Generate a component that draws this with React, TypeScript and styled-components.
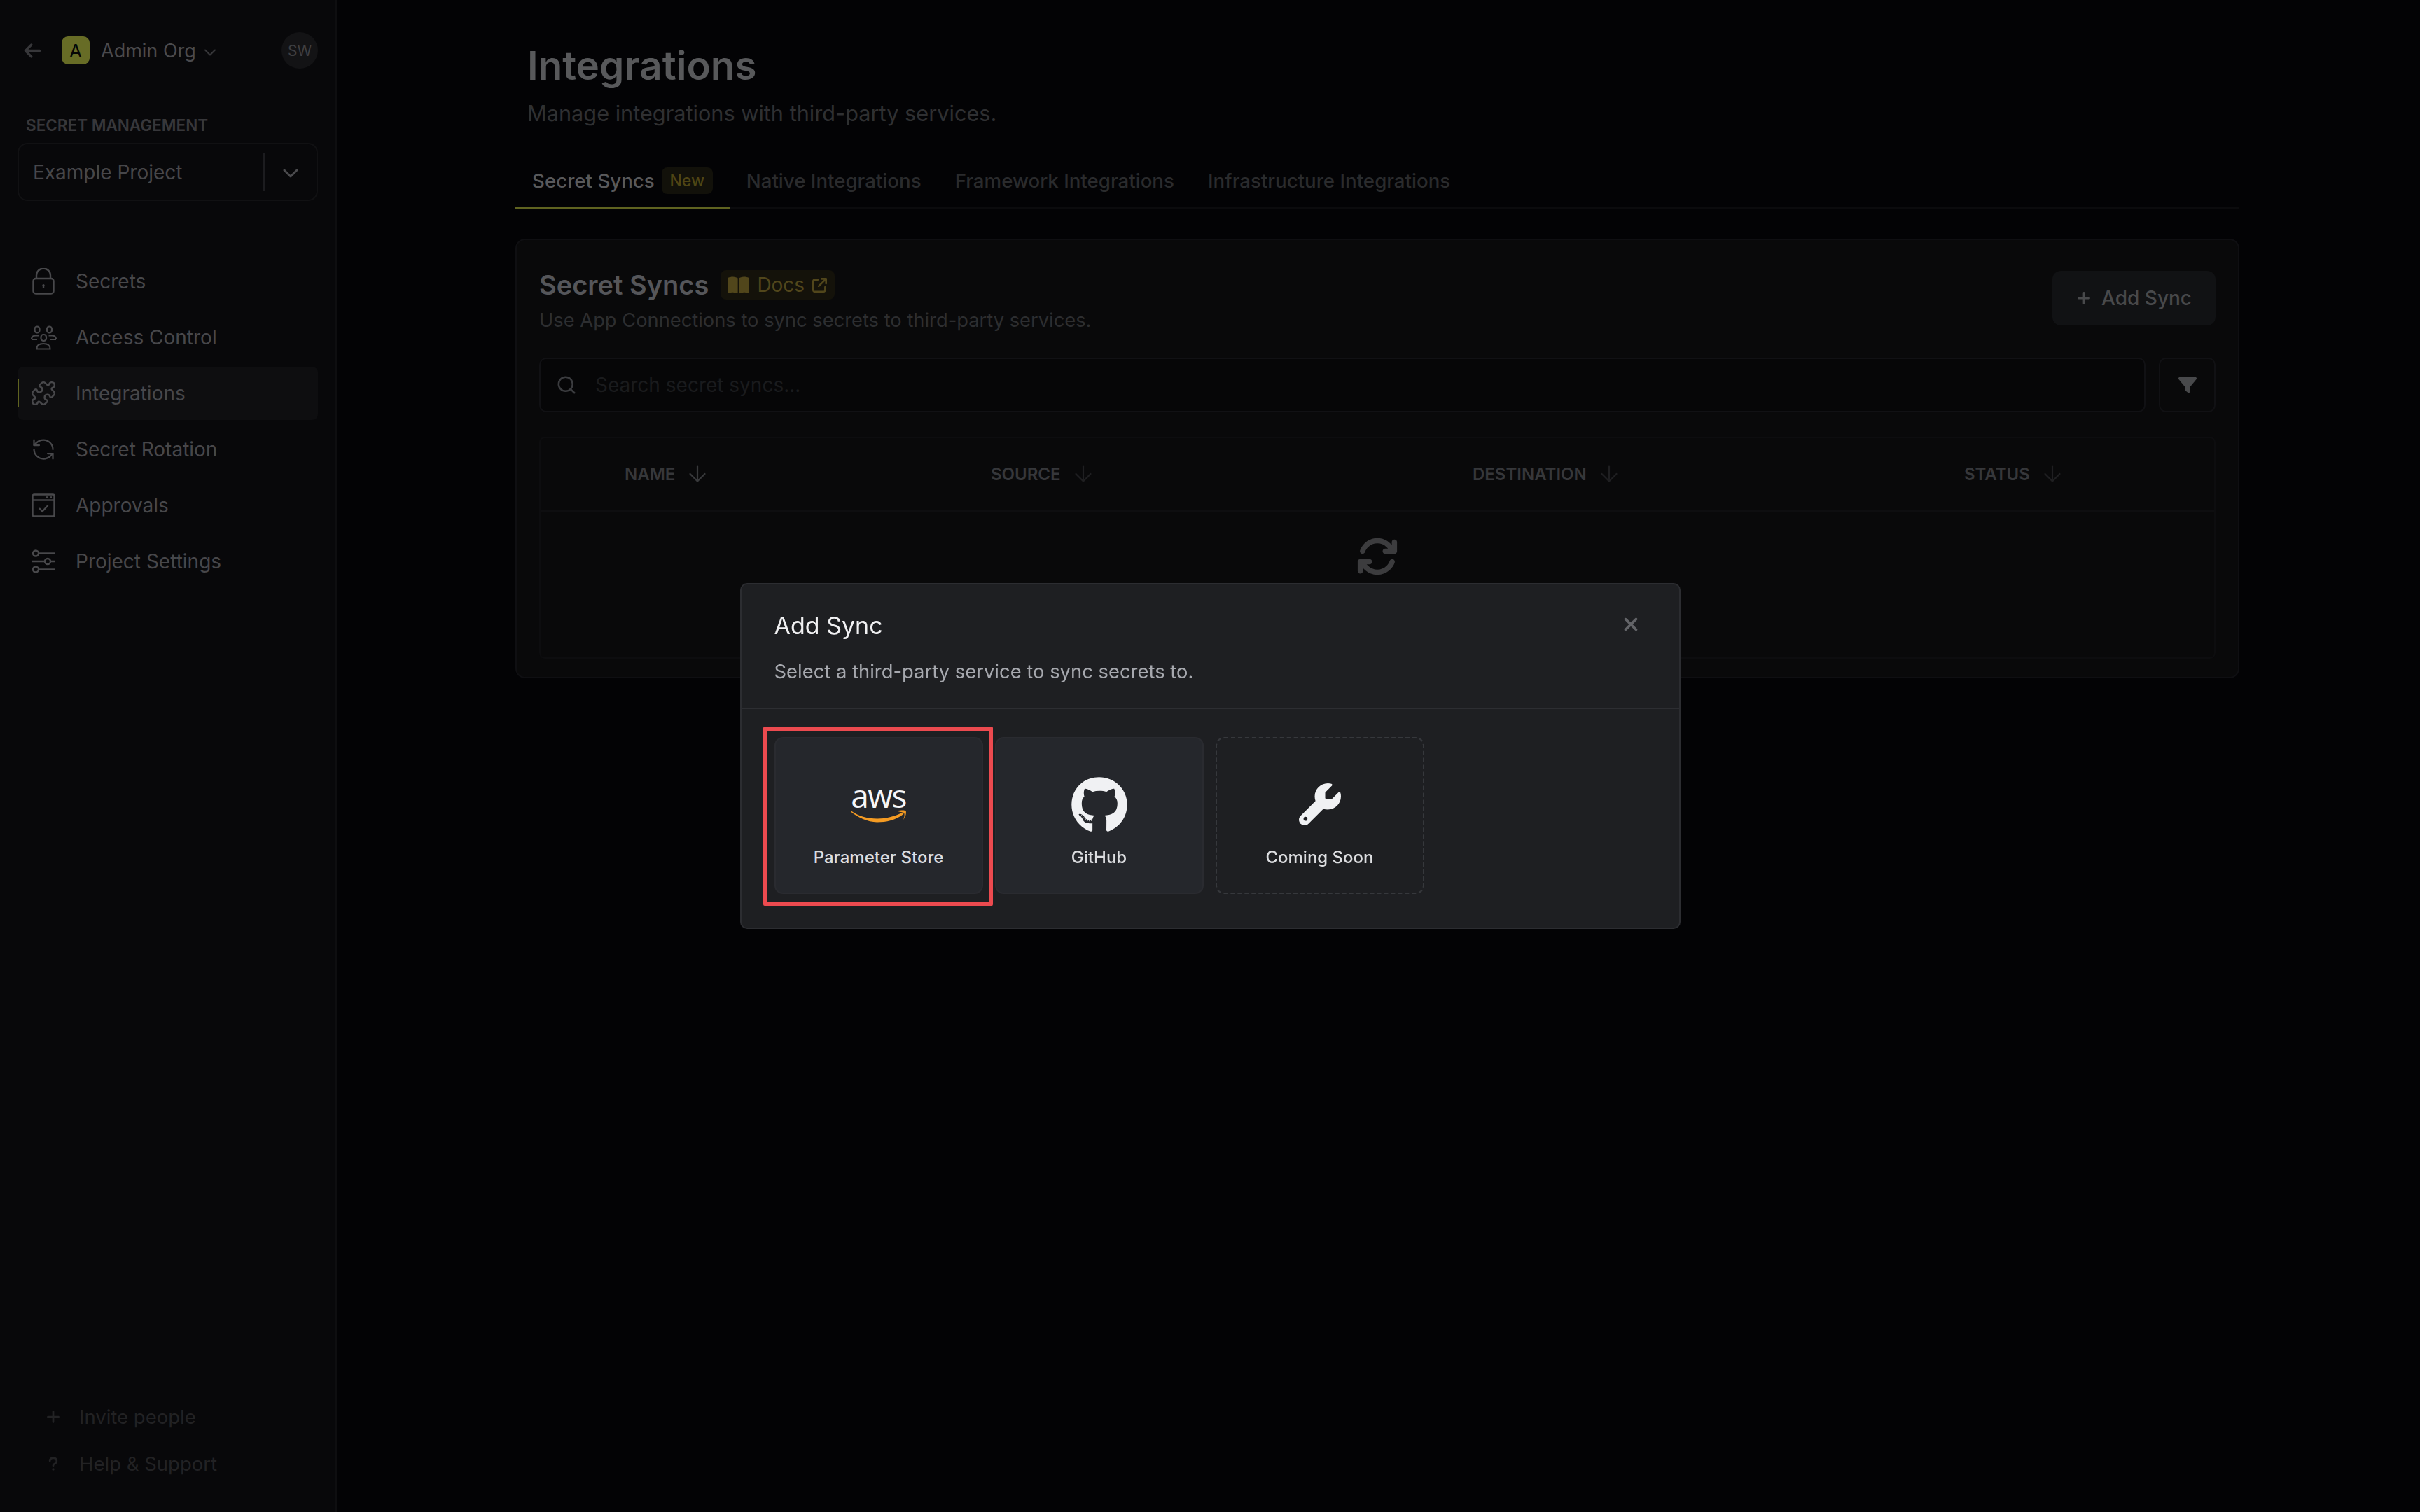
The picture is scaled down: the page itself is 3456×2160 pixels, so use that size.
import React from "react";
import styled, { createGlobalStyle } from "styled-components";
import {
  FaArrowLeft,
  FaArrowsRotate,
  FaArrowUpRightFromSquare,
  FaBookOpen,
  FaChevronDown,
  FaFilter,
  FaGithub,
  FaPlus,
  FaQuestion,
  FaWrench,
  FaXmark,
} from "react-icons/fa6";
import { ArrowDown, ChevronDown, Puzzle, RefreshCcw, Search } from "lucide-react";

const GlobalStyle = createGlobalStyle`
  html, body {
    margin: 0;
    width: 3456px;
    height: 2160px;
    overflow: hidden;
    background: #030305;
    font-family: "Inter", "Liberation Sans", sans-serif;
  }
  * { box-sizing: border-box; }
`;

const Page = styled.div`
  display: flex;
  width: 3456px;
  height: 2160px;
`;

/* sidebar */

const Sidebar = styled.aside`
  display: flex;
  flex-direction: column;
  flex: none;
  width: 481px;
  height: 100%;
  padding: 46px 25px 36px 25px;
  background: #08080a;
  border-right: 2px solid #0e0e10;
`;

const OrgRow = styled.div`
  display: flex;
  align-items: center;
  height: 52px;
  padding-left: 8px;
  color: #37373a;
  font-size: 27px;
`;

const OrgLogo = styled.div`
  display: grid;
  place-items: center;
  width: 40px;
  height: 40px;
  margin-left: 28px;
  border-radius: 9px;
  background: #676c26;
  color: #050505;
  font-size: 26px;
`;

const OrgName = styled.span`
  margin-left: 16px;
  color: #4a4a4d;
`;

const OrgChevron = styled(ChevronDown)`
  margin: 6px 0 0 6px;
`;

const Avatar = styled.div`
  display: grid;
  place-items: center;
  width: 52px;
  height: 52px;
  margin-left: auto;
  border-radius: 50%;
  background: #131315;
  color: #3f3f42;
  font-size: 21px;
`;

const SectionLabel = styled.div`
  margin: 65px 0 0 12px;
  color: #37373a;
  font-size: 22.5px;
  font-weight: 600;
  line-height: 32px;
`;

const ProjectSelect = styled.div`
  display: flex;
  align-items: center;
  height: 83px;
  margin-top: 9px;
  padding-left: 20px;
  border: 2px solid #111113;
  border-radius: 14px;
  color: #47474a;
  font-size: 28px;
`;

const SelectChevron = styled.div`
  display: grid;
  place-items: center;
  width: 76px;
  height: 55px;
  margin-left: auto;
  border-left: 2px solid #1c1c1f;
  color: #4b4b4e;
  font-size: 24px;
`;

const Nav = styled.nav`
  display: flex;
  flex-direction: column;
  gap: 4px;
  margin-top: 77px;
`;

const NavItem = styled.div<{ $active?: boolean }>`
  position: relative;
  display: flex;
  align-items: center;
  height: 76px;
  border-radius: 8px;
  background: ${({ $active }) => ($active ? "#0e0e10" : "transparent")};
  color: #47474a;
  font-size: 28px;
  &::before {
    content: "";
    display: ${({ $active }) => ($active ? "block" : "none")};
    position: absolute;
    left: 0;
    top: 18px;
    width: 2px;
    height: 40px;
    background: #5f6320;
  }
`;

const NavIcon = styled.span`
  display: grid;
  place-items: center;
  flex: none;
  width: 74px;
  margin-right: 9px;
  color: #48484b;
  svg {
    display: block;
  }
`;

const Footer = styled.div`
  display: flex;
  flex-direction: column;
  margin-top: auto;
`;

const FooterItem = styled.div`
  display: flex;
  align-items: center;
  height: 67px;
  padding-left: 40px;
  color: #222224;
  font-size: 27.5px;
  svg {
    width: 22px;
    height: 22px;
    margin-right: 26px;
  }
`;

const LockIcon = () => (
  <svg width="32" height="38" viewBox="0 0 32 38" fill="none" stroke="currentColor" strokeWidth="2.4">
    <rect x="1.5" y="15" width="29" height="21.5" rx="3.5" />
    <path d="M6 15V10.5a10 10 0 0 1 20 0V15" />
    <circle cx="16" cy="24.5" r="1.6" fill="currentColor" stroke="none" />
    <path d="M16 25v4" />
  </svg>
);

const UsersIcon = () => (
  <svg width="37" height="35" viewBox="0 0 37 35" fill="none" stroke="currentColor" strokeWidth="2.2">
    <rect x="5.5" y="1.5" width="7" height="9" rx="3.5" />
    <rect x="23" y="1.5" width="7" height="9" rx="3.5" />
    <rect x="14.5" y="13" width="7.5" height="9" rx="3.5" />
    <path d="M1 20c0-4 2.5-5.5 6-5.5h4.5M36 20c0-4-2.500-5.500-6-5.500h-4.500M1 20h8M36 20h-8" />
    <path d="M8.500 33.500c0-5 3-7.500 9.500-7.500s9.500 2.500 9.500 7.500z" />
  </svg>
);

const ApprovalIcon = () => (
  <svg width="34" height="34" viewBox="0 0 34 34" fill="none" stroke="currentColor" strokeWidth="2.4">
    <rect x="1.500" y="1.500" width="31" height="31" rx="2" />
    <path d="M1.500 9.500h31" />
    <path d="M21 5.500h2M27 5.500h2" />
    <path d="M11 21l4.500 4.500L23.500 17" />
  </svg>
);

const SlidersIcon = () => (
  <svg width="34" height="34" viewBox="0 0 34 34" fill="none" stroke="currentColor" strokeWidth="2.4">
    <circle cx="6" cy="5.500" r="4" />
    <path d="M10 5.500h23" />
    <circle cx="23" cy="17" r="4" />
    <path d="M1 17h18M27 17h6" />
    <circle cx="6" cy="28.500" r="4" />
    <path d="M10 28.500h23" />
  </svg>
);

/* main column */

const Main = styled.main`
  flex: 1;
  padding-top: 58px;
`;

const Content = styled.div`
  width: 2462px;
  margin-left: 255px;
`;

const PageTitle = styled.h1`
  margin: 0 0 0 17px;
  color: #58595b;
  font-size: 56.5px;
  font-weight: 600;
  line-height: 72px;
`;

const PageSubtitle = styled.p`
  margin: 10px 0 0 17px;
  color: #2f3032;
  font-size: 30.7px;
  line-height: 44px;
`;

const Tabs = styled.div`
  display: flex;
  height: 81px;
  margin-top: 33px;
  border-bottom: 2px solid #0b0b0d;
`;

const Tab = styled.div<{ $active?: boolean }>`
  display: flex;
  align-items: center;
  gap: 10px;
  height: 81px;
  padding: 2px 24px 0 24px;
  border-bottom: 2px solid ${({ $active }) => ($active ? "#5f6320" : "transparent")};
  color: ${({ $active }) => ($active ? "#59595b" : "#2a2b2d")};
  font-size: 27.7px;
  font-weight: 500;
`;

const NewBadge = styled.span`
  display: grid;
  place-items: center;
  width: 73px;
  height: 38px;
  border-radius: 8px;
  background: #12110a;
  color: #4f4514;
  font-size: 23px;
`;

const Card = styled.section`
  margin-top: 43px;
  padding: 44px 32px 26px 32px;
  border: 2px solid #0f0f12;
  border-radius: 14px;
  background: #09090a;
`;

const CardHead = styled.div`
  display: flex;
  justify-content: space-between;
  height: 78px;
`;

const HeadingRow = styled.div`
  display: flex;
  align-items: center;
  gap: 17px;
  height: 40px;
`;

const Heading = styled.h2`
  margin: 0;
  color: #55565a;
  font-size: 38px;
  font-weight: 600;
`;

const DocsBadge = styled.span`
  display: flex;
  align-items: center;
  gap: 11px;
  height: 42px;
  padding: 0 11px 0 10px;
  border-radius: 8px;
  background: #14120a;
  color: #51461b;
  font-size: 28px;
  svg:first-child {
    font-size: 31px;
  }
  svg:last-child {
    font-size: 21px;
  }
`;

const CardSub = styled.p`
  margin: 13px 0 0;
  color: #2d2e30;
  font-size: 27.3px;
  line-height: 36px;
`;

const AddButton = styled.div`
  display: flex;
  align-items: center;
  gap: 14px;
  height: 78px;
  padding: 0 34px;
  border-radius: 12px;
  background: #111214;
  color: #48494b;
  font-size: 28px;
  font-weight: 500;
  svg {
    font-size: 22px;
  }
`;

const Toolbar = styled.div`
  display: flex;
  gap: 19px;
  margin-top: 46px;
`;

const SearchBox = styled.div`
  display: flex;
  flex: 1;
  align-items: center;
  gap: 26px;
  height: 78px;
  padding-left: 22px;
  border: 2px solid #111114;
  border-radius: 10px;
  background: #060607;
  color: #1a1b1d;
  font-size: 28px;
  svg {
    color: #3b3c3f;
  }
`;

const FilterButton = styled.div`
  display: grid;
  place-items: center;
  width: 81px;
  height: 78px;
  border: 2px solid #111114;
  border-radius: 10px;
  color: #48494b;
  font-size: 26px;
`;

const Table = styled.div`
  height: 317px;
  margin-top: 35px;
  border: 2px solid #0d0d0f;
  border-radius: 8px;
`;

const TableHeader = styled.div`
  display: grid;
  grid-template-columns: 120px 523px 688px 702px 1fr;
  align-items: center;
  height: 105px;
  border-bottom: 3px solid #0e0e10;
`;

const HeaderCell = styled.div<{ $sorted?: boolean }>`
  display: flex;
  align-items: center;
  gap: 14px;
  color: #36373a;
  font-size: 24px;
  font-weight: 600;
  svg {
    color: ${({ $sorted }) => ($sorted ? "#38393b" : "#1f1f21")};
  }
`;

const TableBody = styled.div`
  display: flex;
  justify-content: center;
  padding-top: 34px;
  color: #3c3c3e;
  font-size: 60px;
`;

/* modal */

const Overlay = styled.div`
  position: fixed;
  inset: 0;
  display: grid;
  place-items: center;
`;

const Modal = styled.div`
  width: 1343px;
  height: 494px;
  border: 2px solid #2c2d31;
  border-radius: 10px;
  background: #1e1f22;
`;

const ModalHead = styled.div`
  position: relative;
  height: 178px;
  padding: 35px 47px 0;
  border-bottom: 2px solid #2d2e32;
`;

const ModalTitle = styled.h3`
  margin: 0;
  color: #f1f1f3;
  font-size: 34px;
  font-weight: 400;
  line-height: 48px;
`;

const ModalSub = styled.p`
  margin: 23px 0 0;
  color: #a6a8ae;
  font-size: 27.4px;
  line-height: 36px;
`;

const CloseButton = styled.div`
  position: absolute;
  top: 42px;
  right: 54px;
  color: #636468;
  font-size: 30px;
  line-height: 0;
`;

const CardGrid = styled.div`
  display: grid;
  grid-template-columns: repeat(4, 298px);
  gap: 17px;
  padding: 40px 47px 0;
`;

const ServiceCard = styled.div<{ $dashed?: boolean }>`
  position: relative;
  display: flex;
  flex-direction: column;
  align-items: center;
  height: 224px;
  border: 2px ${({ $dashed }) => ($dashed ? "dashed #36383c" : "solid #2a2b30")};
  border-radius: 12px;
  background: ${({ $dashed }) => ($dashed ? "transparent" : "#25272c")};
`;

const ServiceLogo = styled.div`
  display: grid;
  place-items: center;
  height: 80px;
  margin-top: 54px;
  color: #f0f1f3;
  font-size: 60px;
`;

const ServiceName = styled.div`
  margin-top: 20px;
  color: #dcdde0;
  font-size: 24px;
  font-weight: 500;
  line-height: 32px;
`;

const Highlight = styled.div`
  position: absolute;
  top: -17px;
  left: -18px;
  width: 328px;
  height: 256px;
  border: 6px solid #ec4a4f;
  border-radius: 2px;
  pointer-events: none;
`;

const AwsMark = styled.div`
  display: flex;
  flex-direction: column;
  align-items: center;
  margin-bottom: 10px;
`;

const AwsText = styled.span`
  color: #f7f7f9;
  font-family: "Open Sans", sans-serif;
  font-size: 46px;
  font-weight: 500;
  letter-spacing: -1.5px;
  line-height: 46px;
`;

const AwsSmile = styled.svg`
  display: block;
  width: 84px;
  height: 18px;
  margin-top: -2px;
`;

const AwsLogo = () => (
  <AwsMark>
    <AwsText>aws</AwsText>
    <AwsSmile viewBox="0 31 84 18">
      <path d="M2 32c11 8 24 11.500 38 11.500 12 0 24-3 35-8.500 2-1 3.500 1 1.500 2.500-10 8-24 11-37 11C26 48 12 42 2 33.500z" fill="#f49b23" />
      <path d="M68 32.500c4-1 10-1.500 12.500-.5 1.500 4-1 10-3.500 13 2-4 2-8 1-10-2-.8-6-.8-10-2.500z" fill="#f49b23" />
    </AwsSmile>
  </AwsMark>
);

const NAV_ITEMS = [
  { label: "Secrets", icon: <LockIcon /> },
  { label: "Access Control", icon: <UsersIcon /> },
  { label: "Integrations", icon: <Puzzle size={38} strokeWidth={1.5} />, active: true },
  { label: "Secret Rotation", icon: <RefreshCcw size={36} strokeWidth={1.5} /> },
  { label: "Approvals", icon: <ApprovalIcon /> },
  { label: "Project Settings", icon: <SlidersIcon /> },
];

const COLUMNS = ["Name", "Source", "Destination", "Status"];

export default function App() {
  return (
    <Page>
      <GlobalStyle />
      <Sidebar>
        <OrgRow>
          <FaArrowLeft />
          <OrgLogo>A</OrgLogo>
          <OrgName>Admin Org</OrgName>
          <OrgChevron size={28} strokeWidth={1.8} />
          <Avatar>SW</Avatar>
        </OrgRow>
        <SectionLabel>SECRET MANAGEMENT</SectionLabel>
        <ProjectSelect>
          Example Project
          <SelectChevron>
            <FaChevronDown />
          </SelectChevron>
        </ProjectSelect>
        <Nav>
          {NAV_ITEMS.map(({ label, icon, active }) => (
            <NavItem key={label} $active={active}>
              <NavIcon>{icon}</NavIcon>
              {label}
            </NavItem>
          ))}
        </Nav>
        <Footer>
          <FooterItem>
            <FaPlus />
            Invite people
          </FooterItem>
          <FooterItem>
            <FaQuestion />
            Help &amp; Support
          </FooterItem>
        </Footer>
      </Sidebar>

      <Main>
        <Content>
          <PageTitle>Integrations</PageTitle>
          <PageSubtitle>Manage integrations with third-party services.</PageSubtitle>
          <Tabs>
            <Tab $active>
              Secret Syncs <NewBadge>New</NewBadge>
            </Tab>
            <Tab>Native Integrations</Tab>
            <Tab>Framework Integrations</Tab>
            <Tab>Infrastructure Integrations</Tab>
          </Tabs>
          <Card>
            <CardHead>
              <div>
                <HeadingRow>
                  <Heading>Secret Syncs</Heading>
                  <DocsBadge>
                    <FaBookOpen />
                    Docs
                    <FaArrowUpRightFromSquare />
                  </DocsBadge>
                </HeadingRow>
                <CardSub>Use App Connections to sync secrets to third-party services.</CardSub>
              </div>
              <AddButton>
                <FaPlus />
                Add Sync
              </AddButton>
            </CardHead>
            <Toolbar>
              <SearchBox>
                <Search size={30} strokeWidth={2} />
                Search secret syncs...
              </SearchBox>
              <FilterButton>
                <FaFilter />
              </FilterButton>
            </Toolbar>
            <Table>
              <TableHeader>
                <span />
                {COLUMNS.map((name, index) => (
                  <HeaderCell key={name} $sorted={index === 0}>
                    {name.toUpperCase()}
                    <ArrowDown size={36} strokeWidth={1.5} />
                  </HeaderCell>
                ))}
              </TableHeader>
              <TableBody>
                <FaArrowsRotate />
              </TableBody>
            </Table>
          </Card>
        </Content>
      </Main>

      <Overlay>
        <Modal>
          <ModalHead>
            <ModalTitle>Add Sync</ModalTitle>
            <ModalSub>Select a third-party service to sync secrets to.</ModalSub>
            <CloseButton>
              <FaXmark />
            </CloseButton>
          </ModalHead>
          <CardGrid>
            <ServiceCard>
              <ServiceLogo>
                <AwsLogo />
              </ServiceLogo>
              <ServiceName>Parameter Store</ServiceName>
              <Highlight />
            </ServiceCard>
            <ServiceCard>
              <ServiceLogo>
                <FaGithub size={82} />
              </ServiceLogo>
              <ServiceName>GitHub</ServiceName>
            </ServiceCard>
            <ServiceCard $dashed>
              <ServiceLogo>
                <FaWrench />
              </ServiceLogo>
              <ServiceName>Coming Soon</ServiceName>
            </ServiceCard>
          </CardGrid>
        </Modal>
      </Overlay>
    </Page>
  );
}
